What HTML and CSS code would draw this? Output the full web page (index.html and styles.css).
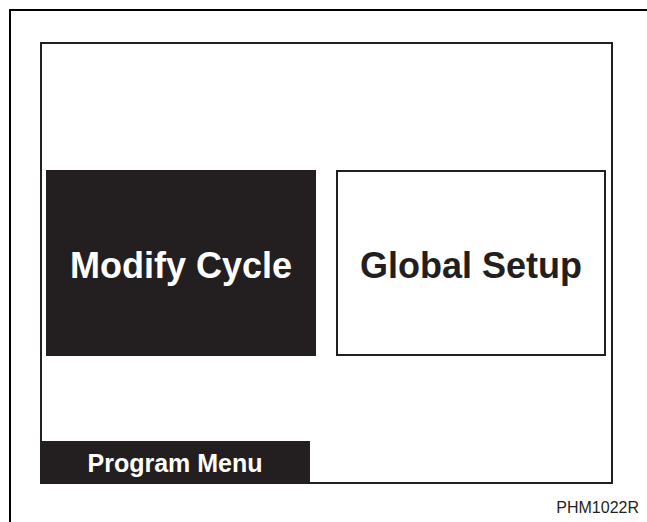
FILE: index.html
```html
<!DOCTYPE html>
<html lang="en">
<head>
    <meta charset="UTF-8">
    <meta name="viewport" content="width=device-width, initial-scale=1.0">
    <title>Program Menu</title>
    <link rel="stylesheet" href="styles.css">
</head>
<body>
    <div class="frame">
        <div class="screen">
            <div class="choices">
                <div class="choice selected">Modify Cycle</div>
                <div class="choice">Global Setup</div>
            </div>
            <div class="title-bar">Program Menu</div>
        </div>
        <div class="figure-id">PHM1022R</div>
    </div>
</body>
</html>
```

FILE: styles.css
```css
html, body {
    margin: 0;
    padding: 0;
    background-color: #fff;
    overflow: hidden;
}

body {
    font-family: "Liberation Sans", Arial, sans-serif;
    color: #231f20;
}

.frame {
    margin: 9px 0 0 9px;
    padding: 31px 0 0 29px;
    min-height: 480px;
    border-top: 2px solid #000;
    border-left: 2px solid #000;
}

.screen {
    width: 569px;
    height: 438px;
    border: 2px solid #231f20;
    display: flex;
    flex-direction: column;
}

.choices {
    display: flex;
    gap: 20px;
    margin: 126px 0 0 4px;
}

.choice {
    box-sizing: border-box;
    width: 270px;
    height: 186px;
    padding-top: 5px;
    border: 2px solid #231f20;
    display: flex;
    align-items: center;
    justify-content: center;
    font-size: 36px;
    font-weight: bold;
}

.choice.selected {
    background-color: #231f20;
    color: #fff;
}

.title-bar {
    margin: auto 0 -2px -2px;
    width: 270px;
    height: 43px;
    background-color: #231f20;
    color: #fff;
    font-size: 25px;
    font-weight: bold;
    display: flex;
    align-items: center;
    justify-content: center;
    padding-top: 2px;
    box-sizing: border-box;
}

.figure-id {
    margin-top: 15px;
    padding-right: 8px;
    text-align: right;
    font-size: 16px;
    line-height: 18px;
}
```
